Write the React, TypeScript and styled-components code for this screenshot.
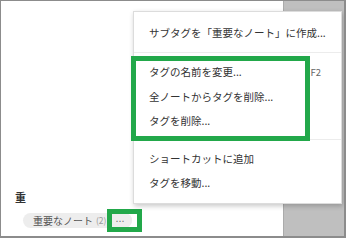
import React from "react";
import styled, { createGlobalStyle } from "styled-components";

const GlobalStyle = createGlobalStyle`
  html, body { margin: 0; padding: 0; background: #ffffff; }
  body {
    font-family: "Noto Sans CJK JP", "Noto Sans", sans-serif;
    color: #333333;
  }
  * { box-sizing: border-box; }
`;

const Frame = styled.div`
  position: relative;
  width: 346px;
  height: 238px;
  display: flex;
  border-style: solid;
  border-color: #8c8c8c;
  border-width: 1px 2px 2px 1px;
  overflow: hidden;
`;

const Main = styled.div`
  flex: 1;
  display: flex;
  flex-direction: column;
  justify-content: flex-end;
  padding: 0 0 8px 14px;
  background: #ffffff;
`;

const Side = styled.div`
  width: 61px;
  background: #bfbfbf;
  border-left: 1px solid #ababab;
`;

const GroupTitle = styled.div`
  font-size: 11px;
  line-height: 14px;
  font-weight: 700;
  color: #333333;
  margin-bottom: 9px;
`;

const Pill = styled.div`
  position: relative;
  display: flex;
  align-items: center;
  width: 109px;
  height: 15px;
  margin-left: 8px;
  padding-left: 10px;
  border-radius: 8px;
  background: #ededed;
`;

const PillLabel = styled.span`
  font-size: 10px;
  line-height: 15px;
  color: #555555;
  white-space: nowrap;
`;

const PillCount = styled.span`
  font-size: 8.5px;
  line-height: 15px;
  color: #9a9a9a;
  margin-left: 3px;
  white-space: nowrap;
`;

const MoreButton = styled.span`
  position: absolute;
  right: 0;
  top: 0;
  width: 24px;
  height: 15px;
  display: flex;
  align-items: center;
  justify-content: center;
  border-radius: 0 8px 8px 0;
  background: #ededed;
  font-family: "DejaVu Sans", sans-serif;
  font-size: 9px;
  color: #666666;
`;

const Highlight = styled.span<{ $t: number; $l: number; $w: number; $h: number; $b: number }>`
  position: absolute;
  top: ${(p) => p.$t}px;
  left: ${(p) => p.$l}px;
  width: ${(p) => p.$w}px;
  height: ${(p) => p.$h}px;
  border: ${(p) => p.$b}px solid #22a84a;
  pointer-events: none;
  z-index: 2;
`;

const Menu = styled.div`
  position: absolute;
  left: 132px;
  top: 10px;
  width: 209px;
  height: 193px;
  padding: 8px 0;
  background: #ffffff;
  border: 1px solid #dcdcdc;
  box-shadow: 1px 2px 5px rgba(0, 0, 0, 0.22);
  z-index: 5;
`;

const MenuGroup = styled.div`
  position: relative;
`;

const MenuItem = styled.div`
  display: flex;
  align-items: center;
  justify-content: space-between;
  height: 24.5px;
  padding: 0 20px 0 15px;
  font-size: 10.5px;
  color: #333333;
  white-space: nowrap;
`;

const Shortcut = styled.span`
  font-size: 9.5px;
  color: #666666;
  position: relative;
  z-index: 3;
`;

const Separator = styled.div<{ $gap: number }>`
  height: 1px;
  background: #ececec;
  margin: ${(p) => p.$gap}px 0;
`;

export default function App() {
  return (
    <>
      <GlobalStyle />
      <Frame>
        <Main>
          <GroupTitle>重</GroupTitle>
          <Pill>
            <PillLabel>重要なノート</PillLabel>
            <PillCount>(2)</PillCount>
            <MoreButton>
              ⋯
              <Highlight $t={-4} $l={-1} $w={35} $h={23} $b={5} />
            </MoreButton>
          </Pill>
        </Main>
        <Side />
        <Menu>
          <MenuItem>サブタグを「重要なノート」に作成...</MenuItem>
          <Separator $gap={7} />
          <MenuGroup>
            <MenuItem>
              <span>タグの名前を変更...</span>
              <Shortcut>F2</Shortcut>
            </MenuItem>
            <MenuItem>全ノートからタグを削除...</MenuItem>
            <MenuItem>タグを削除...</MenuItem>
            <Highlight $t={-4} $l={-3} $w={179} $h={85} $b={5} />
          </MenuGroup>
          <Separator $gap={6} />
          <MenuItem>ショートカットに追加</MenuItem>
          <MenuItem>タグを移動...</MenuItem>
        </Menu>
      </Frame>
    </>
  );
}
